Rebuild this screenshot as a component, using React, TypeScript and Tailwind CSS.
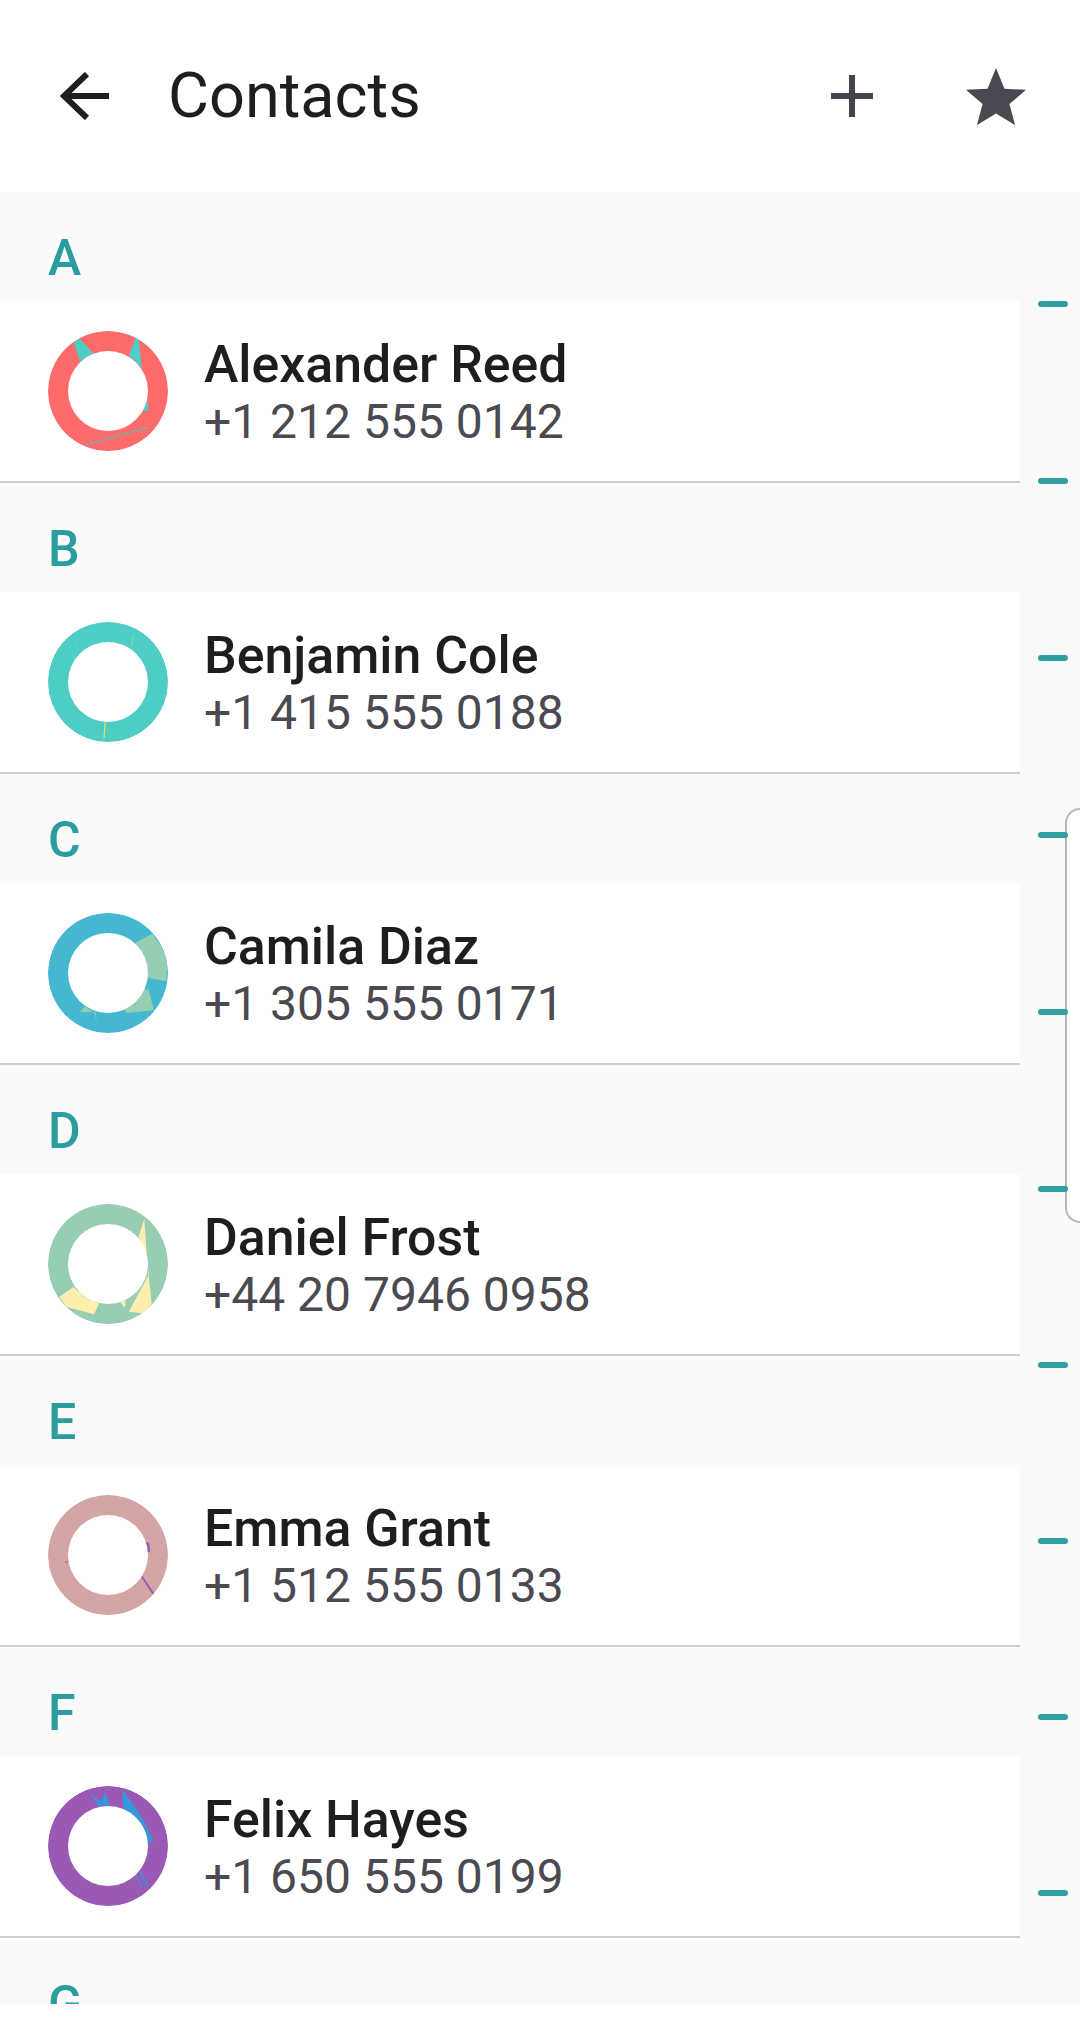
import React from "react";

type Shape = { points?: string; line?: [number, number, number, number]; width?: number; color?: string };
type Contact = { letter: string; name: string; phone: string; base: string; accent: string; shapes: Shape[] };

const contacts: Contact[] = [
  {
    letter: "A", name: "Alexander Reed", phone: "+1 212 555 0142", base: "#ff6b6b", accent: "#4ecdc4",
    shapes: [
      { points: "25.7,10.7 32,8 45.3,22.3 32,30.7" },
      { points: "88,6.7 80.7,24 93.7,37.3 90.7,7.3" },
      { points: "100.3,69 100.3,79.7 93.7,79.7" },
      { line: [37, 114, 100.3, 96.3], width: 2, color: "#a09a98" },
    ],
  },
  {
    letter: "B", name: "Benjamin Cole", phone: "+1 415 555 0188", base: "#4ecdc4", accent: "#ffeead",
    shapes: [
      { line: [57.3, 99.7, 56, 116.3], width: 1.2, color: "#dfe36e" },
      { line: [86, 12, 83, 24.7], width: 0.6, color: "#a5e0c0" },
      { line: [28.7, 23, 29.2, 25], width: 0.6, color: "#a5e0c0" },
      { line: [102, 83.5, 102.6, 85], width: 0.6, color: "#a5e0c0" },
    ],
  },
  {
    letter: "C", name: "Camila Diaz", phone: "+1 305 555 0171", base: "#45b7d1", accent: "#96ceb4",
    shapes: [
      { points: "104.3,20.7 87.3,29.7 99.3,64.7 118.7,68.3 119,47 113,33" },
      { points: "100.3,75.7 106,97.3 78.7,100 70,85" },
      { points: "32,99 45.3,99 37,93.3" },
      { points: "46,99 48.7,108 47.5,99" },
    ],
  },
  {
    letter: "D", name: "Daniel Frost", phone: "+44 20 7946 0958", base: "#96ceb4", accent: "#ffeead",
    shapes: [
      { points: "96.3,14.7 90.5,33 101.3,69.7 80.7,108 95.3,109 103.7,100.3 99.3,58" },
      { points: "25.3,83 11.3,93 18.7,103 46,110.3 51,99.7 37,93" },
      { points: "72,98 77,103.7 77.7,96.3" },
    ],
  },
  {
    letter: "E", name: "Emma Grant", phone: "+1 512 555 0133", base: "#d4a5a5", accent: "#9b59b6",
    shapes: [
      { line: [93.7, 81.3, 105.3, 98.7], width: 2 },
      { points: "98,47 101.3,47.7 102,57 98.5,57" },
      { line: [17, 67, 20.3, 67], width: 1 },
    ],
  },
  {
    letter: "F", name: "Felix Hayes", phone: "+1 650 555 0199", base: "#9b59b6", accent: "#3498db",
    shapes: [
      { points: "74.3,3 75.3,22.3 95.3,40.7 99.3,57.3 105.3,54.7 93.7,30.7" },
      { points: "42,6.3 50.3,20 62,19.7 57,5.7 53.7,15.7 50.5,14" },
      { line: [88, 89, 93.7, 100.7], width: 1.4 },
      { line: [92, 85.7, 100.3, 100.7], width: 1.4 },
    ],
  },
];

const tickCount = Array.from({ length: 10 }, (_, i) => i);

function Ring({ id, base, accent, shapes }: { id: string; base: string; accent: string; shapes: Shape[] }) {
  return (
    <svg viewBox="0 0 120 120" className="w-[120px] h-[120px] shrink-0">
      <defs>
        <clipPath id={id}>
          <circle cx="60" cy="60" r="60" />
        </clipPath>
      </defs>
      <g clipPath={`url(#${id})`}>
        <circle cx="60" cy="60" r="60" fill={base} />
        {shapes.map((s, i) =>
          s.points ? (
            <polygon key={i} points={s.points} fill={s.color ?? accent} />
          ) : (
            <line
              key={i}
              x1={s.line![0]}
              y1={s.line![1]}
              x2={s.line![2]}
              y2={s.line![3]}
              stroke={s.color ?? accent}
              strokeWidth={s.width}
            />
          )
        )}
      </g>
      <circle cx="60" cy="60" r="40" fill="#ffffff" />
    </svg>
  );
}

function SectionLabel({ letter }: { letter: string }) {
  return (
    <div className="h-[109px] pl-[48px] pt-[31px] text-[50px] leading-[70px] font-medium text-[#2a9d9f]">
      {letter}
    </div>
  );
}

function Row({ c }: { c: Contact }) {
  return (
    <div className="h-[182px] bg-white border-b-2 border-[#cfcfcf] flex items-center pl-[48px] gap-[36px]">
      <Ring id={`ring-${c.letter}`} base={c.base} accent={c.accent} shapes={c.shapes} />
      <div className="flex flex-col pt-[2px]">
        <span className="text-[51.8px] leading-[60px] font-medium text-[#1e1e1e]">{c.name}</span>
        <span className="text-[48px] leading-[54px] text-[#4a4a50]">{c.phone}</span>
      </div>
    </div>
  );
}

export default function App() {
  return (
    <div className="relative w-[1080px] h-[2028px] bg-white font-['Roboto',sans-serif]">
      <header className="h-[192px] flex items-center pl-[60px] pr-[54px]">
        <svg viewBox="0 0 49 48" className="w-[49px] h-[48px] shrink-0" fill="none" stroke="#1e1e1e" strokeWidth="6">
          <path d="M49 24H5" />
          <path d="M27 2L4 24L27 46" />
        </svg>
        <h1 className="ml-[59px] text-[63px] leading-[80px] font-normal text-[#1e1e1e]">Contacts</h1>
        <svg viewBox="0 0 42 42" className="ml-auto w-[42px] h-[42px] shrink-0" fill="none" stroke="#46444c" strokeWidth="6">
          <path d="M21 0V42M0 21H42" />
        </svg>
        <svg viewBox="0 0 60 57" className="ml-[93px] w-[60px] h-[57px] shrink-0" fill="#4a4850">
          <polygon points="30,0 38.5,20.8 60,21.8 43.5,36 49,57 30,45.5 11,57 16.5,36 0,21.8 21.5,20.8" />
        </svg>
      </header>

      <main className="h-[1812px] overflow-hidden bg-[#fafafa] flex">
        <div className="w-[1020px] shrink-0">
          {contacts.map((c) => (
            <section key={c.letter}>
              <SectionLabel letter={c.letter} />
              <Row c={c} />
            </section>
          ))}
          <SectionLabel letter="G" />
        </div>
        <aside className="flex-1 pt-[109px] flex flex-col">
          {tickCount.map((i) => (
            <div
              key={i}
              className={`relative z-10 ml-[18px] w-[30px] h-[6px] shrink-0 rounded-full bg-[#2f9fa1] ${i < 5 ? "mb-[171px]" : "mb-[170px]"}`}
            />
          ))}
        </aside>
      </main>

      <div className="absolute right-0 top-[808px] w-[15px] h-[415px] bg-white border-2 border-r-0 border-[#b8b8b8] rounded-l-[16px]" />
    </div>
  );
}
